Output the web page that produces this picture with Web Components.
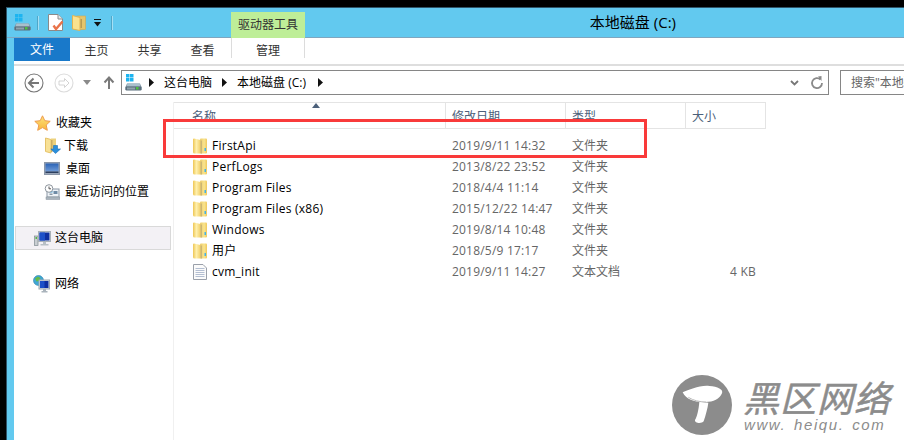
<!DOCTYPE html>
<html lang="zh"><head><meta charset="utf-8"><title>本地磁盘 (C:)</title>
<style>
html,body{margin:0;padding:0;background:#000;height:440px;width:904px;overflow:hidden}
body{font:12px/16px "Open Sans","Noto Sans CJK SC",sans-serif;color:#000;position:relative}
</style></head><body>
<x-window>
  <x-titlebar title-text="本地磁盘 (C:)" context="驱动器工具"></x-titlebar>
  <x-ribbon></x-ribbon>
  <x-addressbar></x-addressbar>
  <x-main>
    <x-nav slot="nav"></x-nav>
    <x-filelist slot="list">
      <x-row icon="folder" name="FirstApi" date="2019/9/11 14:32" type="文件夹"></x-row>
      <x-row icon="folder" name="PerfLogs" date="2013/8/22 23:52" type="文件夹"></x-row>
      <x-row icon="folder" name="Program Files" date="2018/4/4 11:14" type="文件夹"></x-row>
      <x-row icon="folder" name="Program Files (x86)" date="2015/12/22 14:47" type="文件夹"></x-row>
      <x-row icon="folder" name="Windows" date="2019/8/14 10:48" type="文件夹"></x-row>
      <x-row icon="folder" name="用户" date="2018/5/9 17:17" type="文件夹"></x-row>
      <x-row icon="doc" name="cvm_init" date="2019/9/11 14:27" type="文本文档" size="4 KB"></x-row>
    </x-filelist>
  </x-main>
</x-window>
<x-highlight></x-highlight>
<x-watermark></x-watermark>
<script>
const ICONS={
drive:`<svg width="17" height="17" viewBox="0 0 17 17"><g fill="#1db4f0"><rect x="1" y="0" width="3.5" height="3.5"/><rect x="5" y="0" width="3.5" height="3.5"/><rect x="1" y="4" width="3.5" height="3.5"/><rect x="5" y="4" width="3.5" height="3.5"/></g><path d="M2 9.500 15 9.500 16.500 13V16H.5V13Z" fill="#7d93a3"/><path d="M2.500 9.500H14.500L15.500 12.500H1.500Z" fill="#a9c0cc"/><rect x=".5" y="12.500" width="16" height="4" rx="1" fill="#5b6f7c"/><rect x="2" y="13.500" width="8" height="2" fill="#8fa3ad"/><rect x="11" y="13" width="2.500" height="2.500" fill="#4ec23f"/></svg>`,
qdoc:`<svg width="16" height="17" viewBox="0 0 16 17"><path d="M.5.500H10L14.500 5V16.500H.5Z" fill="#fff" stroke="#8a8a8a"/><path d="M10 .5V5H14.500" fill="#e6e6e6" stroke="#8a8a8a"/><path d="M5.500 11.500 8 15 14.500 7.500" fill="none" stroke="#e9734a" stroke-width="2.400"/></svg>`,
qfolder:`<svg width="14" height="16" viewBox="0 0 14 16"><rect x="5" y="1" width="8.500" height="13.500" fill="#e4c56b" stroke="#d2a94c" stroke-width=".6"/><path d="M.5.500 8 2.500V15.500L.5 14Z" fill="#fbe28e" stroke="#e2b552"/><rect x="8.500" y="4" width="1.500" height="9" fill="#b89b52"/></svg>`,
folder:`<svg width="14" height="16" viewBox="0 0 14 16"><defs><linearGradient id="fl" x1="0" x2="1" y1="0" y2="0"><stop offset="0" stop-color="#eec655"/><stop offset=".45" stop-color="#fff0ad"/><stop offset="1" stop-color="#f1cf69"/></linearGradient><linearGradient id="fr" x1="0" x2="1" y1="0" y2="0"><stop offset="0" stop-color="#eccb68"/><stop offset=".6" stop-color="#f9e48f"/><stop offset="1" stop-color="#efc85c"/></linearGradient></defs><rect x="7" y=".5" width="7" height="15" rx="1" fill="url(#fr)"/><path d="M0 1.500Q0 .5 1 .5L7.500 2V15.500H1.500Q0 15.500 0 14Z" fill="url(#fl)"/><rect x="7.500" y="2.500" width="1.500" height="13" fill="#cbb675"/><rect x="11.500" y="10" width="1.500" height="3" fill="#43b2e6"/></svg>`,
doc:`<svg width="14" height="16" viewBox="0 0 14 16"><path d="M.5.500H10L13.500 4V15.500H.5Z" fill="#fbfbfb" stroke="#9aa0aa"/><g stroke="#b4bfd2"><path d="M2.500 4.500H11.500M2.500 6.500H11.500M2.500 8.500H11.500M2.500 10.500H11.500M2.500 12.500H11.500"/></g></svg>`,
star:`<svg width="17" height="16" viewBox="0 0 17 16"><defs><linearGradient id="s" x1="0" y1="0" x2="0" y2="1"><stop offset="0" stop-color="#fbe37c"/><stop offset="1" stop-color="#f9b53a"/></linearGradient></defs><path d="M8.500 .8 10.800 5.700 16.200 6.300 12.200 10 13.300 15.300 8.500 12.600 3.700 15.300 4.800 10 .8 6.300 6.200 5.700Z" fill="url(#s)" stroke="#ee9b4d"/></svg>`,
download:`<svg width="16" height="17" viewBox="0 0 16 17"><path d="M.5 1 6 2.500V16L.5 14.500Z" fill="#f8e196" stroke="#e5c269"/><rect x="6" y="1.500" width="5" height="10" fill="#ecd17c"/><rect x="6" y="3" width="1.500" height="12" fill="#c9ad62"/><path d="M8.500 8.500H12.500V12H15.500L10.500 16.500 5.800 12H8.500Z" fill="#2a8fdb" stroke="#1a6fb7" stroke-width=".6"/></svg>`,
desktop:`<svg width="16" height="13" viewBox="0 0 16 13"><rect x=".5" y=".5" width="15" height="12" fill="#9aa6b8" stroke="#8a96a8"/><defs><linearGradient id="d" x1="0" y1="0" x2="0" y2="1"><stop offset="0" stop-color="#2b63b5"/><stop offset="1" stop-color="#6f9bd8"/></linearGradient></defs><rect x="1.500" y="1.500" width="13" height="8" fill="url(#d)"/><rect x="1.500" y="9.500" width="13" height="1.500" fill="#2d3f5f"/></svg>`,
recent:`<svg width="16" height="16" viewBox="0 0 16 16"><rect x="3" y="5" width="12" height="8" fill="#eef2f6" stroke="#8b98a5"/><rect x="5.500" y="7" width="3" height="1.500" fill="#4aa3d8"/><rect x="9.500" y="7" width="4" height="3" fill="#6e8ba5"/><rect x="5.500" y="9.500" width="3" height="1.500" fill="#8a9aa8"/><rect x="2" y="13" width="14" height="2.500" fill="#aab4bd" stroke="#87929c" stroke-width=".5"/><circle cx="5" cy="4.500" r="3.800" fill="#fff" stroke="#8d959d"/><path d="M5 2.500V4.800H7" fill="none" stroke="#555"/></svg>`,
pc:`<svg width="17" height="15" viewBox="0 0 17 15"><rect x=".5" y="5" width="3.500" height="9.500" fill="#c9ced2" stroke="#7f8a90" stroke-width=".7"/><rect x="1.500" y="6" width="1.500" height="2" fill="#54b948"/><rect x="4.500" y=".5" width="12" height="10" fill="#dfe4e8" stroke="#a9b1b8"/><rect x="5.500" y="1.500" width="10" height="8" fill="#0e2fa0"/><path d="M5.500 1.500H11V9.500H5.500Z" fill="#1c50c8"/><path d="M9 11H12V13H14.500V14.500H6.500V13H9Z" fill="#b7bfc5"/></svg>`,
net:`<svg width="17" height="18" viewBox="0 0 17 18"><circle cx="5.500" cy="5.500" r="5" fill="#3fa7d6" stroke="#2f80a8" stroke-width=".6"/><path d="M2 3.500 5 1.500 7.500 3 6 6 3.500 6.500Z" fill="#64bb47"/><path d="M6 7.500 9 7 8 10 6 10.500Z" fill="#64bb47"/><rect x="6" y="5" width="10.500" height="9" fill="#d5dde2" stroke="#9da8b0"/><rect x="7" y="6" width="8.500" height="7" fill="#0e2fa0"/><path d="M7 6H11.500V13H7Z" fill="#1c50c8"/><path d="M10 14H13V16H14.500V17.500H8.500V16H10Z" fill="#aab4bc"/></svg>`,
back:`<svg width="20" height="20" viewBox="0 0 20 20"><circle cx="10" cy="10" r="9" fill="#fff" stroke="#777" stroke-width="1.100"/><path d="M9.500 5.500 5 10 9.500 14.500M5 10H15" fill="none" stroke="#777" stroke-width="2"/></svg>`,
forward:`<svg width="20" height="20" viewBox="0 0 20 20"><circle cx="10" cy="10" r="9" fill="#fff" stroke="#dcdcdc" stroke-width="1.100"/><path d="M10.500 5.500 15 10 10.500 14.500V12H5V8H10.500Z" fill="#fff" stroke="#d4d4d4"/></svg>`,
up:`<svg width="12" height="14" viewBox="0 0 12 14"><path d="M6 13V2M1.500 6.500 6 1.500 10.500 6.500" fill="none" stroke="#7a7a7a" stroke-width="2"/></svg>`,
refresh:`<svg width="14" height="14" viewBox="0 0 14 14"><path d="M10.500 3.500A5 5 0 1 0 12 7" fill="none" stroke="#8a8a8a" stroke-width="1.800"/><path d="M8 .5 11.500 0 11.500 5Z" fill="#8a8a8a"/></svg>`,
chev:`<svg width="9" height="6" viewBox="0 0 9 6"><path d="M1 1 4.500 4.500 8 1" fill="none" stroke="#777" stroke-width="1.800"/></svg>`,
qdrop:`<svg width="7" height="8" viewBox="0 0 7 8"><rect y="0" width="7" height="1" fill="#111"/><path d="M0 3H7L3.500 7.500Z" fill="#111"/></svg>`,
navdrop:`<svg width="8" height="5" viewBox="0 0 8 5"><path d="M0 0H8L4 5Z" fill="#8a8a8a"/></svg>`,
crumb:`<svg width="5" height="9" viewBox="0 0 5 9"><path d="M0 0 5 4.500 0 9Z" fill="#111"/></svg>`,
sort:`<svg width="8" height="5" viewBox="0 0 8 5"><path d="M4 0 8 5H0Z" fill="#4c607a"/></svg>`
};
function def(name,css,html){
  customElements.define(name,class extends HTMLElement{
    connectedCallback(){
      if(this.shadowRoot)return;
      const r=this.attachShadow({mode:'open'});
      const a=k=>this.getAttribute(k)||'';
      r.innerHTML=`<style>${css}</style>`+(typeof html==='function'?html(a):html);
    }
  });
}
def('x-icon',':host{display:inline-flex;line-height:0;flex:none}',a=>ICONS[a('name')]||'');
def('x-window',
 `:host{display:block;box-sizing:border-box;margin:7px 0 0 6px;height:433px;border-top:1px solid #2f5468;border-left:1px solid #2f5468;background:#62c9ef;}`,
 `<slot></slot>`);
def('x-titlebar',
 `:host{display:flex;align-items:flex-end;height:30px;box-sizing:border-box;border-bottom:1px solid #7fa6bf}
  .qat{display:flex;align-items:center;height:29px;align-self:flex-start;padding-left:7px;width:224px;box-sizing:border-box}
  .sep{width:1px;height:14px;background:#a5dff4;border-left:1px solid #4fa6c7;box-sizing:content-box}
  .ctx{width:74px;height:26px;margin-bottom:-1px;background:#beee98;display:flex;align-items:center;justify-content:center;color:#333;}
  .ttl{width:371px;text-align:right;font-size:15px;line-height:28px;align-self:flex-start;white-space:nowrap}`,
 a=>`<div class="qat"><x-icon name="drive"></x-icon><span class="sep" style="margin:0 0 0 6px"></span><x-icon name="qdoc" style="margin-left:9px"></x-icon><x-icon name="qfolder" style="margin-left:8px"></x-icon><x-icon name="qdrop" style="margin-left:8px"></x-icon><span class="sep" style="margin-left:10px"></span></div><div class="ctx">${a('context')}</div><div class="ttl">${a('title-text')}</div>`);
def('x-ribbon',
 `:host{display:flex;height:26px;margin-left:7px;background:#fff;border-bottom:2px solid #dedede;color:#333}
  .tab{display:flex;align-items:center;justify-content:center;height:26px;width:53px}
  .file{width:56px;height:23px;background:#1979ca;color:#fff;}
  .mg{width:74px;margin-left:2px;background:linear-gradient(#dcdcdc,#dcdcdc) left top/1px 20px no-repeat,linear-gradient(#dcdcdc,#dcdcdc) right top/1px 20px no-repeat}`,
 `<div class="tab file">文件</div><div class="tab">主页</div><div class="tab">共享</div><div class="tab">查看</div><div class="mg tab">管理</div>`);
def('x-addressbar',
 `:host{display:flex;align-items:center;height:36px;margin-left:7px;background:#fff;padding-left:10px;box-sizing:border-box;padding-bottom:3px;overflow:hidden}
  .box{display:flex;align-items:center;height:25px;box-sizing:border-box;border:1px solid #868686;background:#fff;flex:none}
  .addr{width:708px;padding-left:3px}
  .search{width:80px;margin-left:11px;padding-left:10px;color:#666;overflow:hidden;white-space:nowrap}
  .g{flex:1}
  span{white-space:nowrap}`,
 `<x-icon name="back"></x-icon><x-icon name="forward" style="margin-left:10px"></x-icon><x-icon name="navdrop" style="margin-left:9px"></x-icon><x-icon name="up" style="margin-left:12px"></x-icon>
  <div class="box addr" style="margin-left:6px"><x-icon name="drive"></x-icon><x-icon name="crumb" style="margin-left:7px"></x-icon><span style="margin-left:10px">这台电脑</span><x-icon name="crumb" style="margin-left:10px"></x-icon><span style="margin-left:10px">本地磁盘 (C:)</span><x-icon name="crumb" style="margin-left:12px"></x-icon><div class="g"></div><x-icon name="chev"></x-icon><x-icon name="refresh" style="margin:0 4px 0 11px"></x-icon></div>
  <div class="box search">搜索"本地磁盘 (C:)"</div>`);
def('x-main',
 `:host{display:grid;grid-template-columns:159px 1fr;margin-left:7px;height:340px;background:#fff}`,
 `<slot name="nav"></slot><slot name="list"></slot>`);
def('x-nav',
 `:host{display:block;padding-top:9px;box-sizing:border-box}
  .r{display:flex;align-items:center;height:23px;white-space:nowrap}
  .sel{height:24px;margin:23px 2px 22px 1px;box-sizing:border-box;border:1px solid #d9d9d9;background:#f3f1f5}`,
 `<div class="r"><x-icon name="star" style="margin-left:20px"></x-icon><span style="margin-left:5px">收藏夹</span></div>
  <div class="r"><x-icon name="download" style="margin-left:31px"></x-icon><span style="margin-left:3px">下载</span></div>
  <div class="r"><x-icon name="desktop" style="margin-left:30px"></x-icon><span style="margin-left:6px">桌面</span></div>
  <div class="r"><x-icon name="recent" style="margin-left:30px"></x-icon><span style="margin-left:5px">最近访问的位置</span></div>
  <div class="r sel"><x-icon name="pc" style="margin-left:18px"></x-icon><span style="margin-left:4px">这台电脑</span></div>
  <div class="r"><x-icon name="net" style="margin-left:19px"></x-icon><span style="margin-left:5px">网络</span></div>`);
def('x-filelist',
 `:host{display:block;border-left:1px solid #f0f0f0;box-sizing:border-box;height:340px}
  .head{display:flex;height:27px;box-sizing:border-box;border-top:1px solid #e4e4e4;border-bottom:1px solid #e4e4e4;width:592px;color:#4c607a;position:relative}
  .c{box-sizing:border-box;padding:6px 0 0 6px;border-right:1px solid #e4e4e4}
  .n{width:272px;padding-left:18px}.d{width:120px}.t{width:120px}.s{width:80px}
  .arrow{position:absolute;left:138px;top:0;line-height:0}
  .rows{padding-top:6px}`,
 `<div class="head"><span class="arrow"><x-icon name="sort"></x-icon></span><div class="c n">名称</div><div class="c d">修改日期</div><div class="c t">类型</div><div class="c s">大小</div></div><div class="rows"><slot></slot></div>`);
def('x-row',
 `:host{display:flex;align-items:center;height:21px;white-space:nowrap}
  .i{width:38px;padding-left:19px;box-sizing:border-box;display:flex;flex:none}
  .n{width:240px;flex:none;letter-spacing:.25px}
  .d{width:120px;flex:none;color:#666;letter-spacing:.2px}
  .t{width:120px;flex:none;color:#666}
  .s{width:64px;flex:none;text-align:right;color:#666;letter-spacing:.2px}`,
 a=>`<div class="i"><x-icon name="${a('icon')}"></x-icon></div><div class="n">${a('name')}</div><div class="d">${a('date')}</div><div class="t">${a('type')}</div><div class="s">${a('size')}</div>`);
def('x-highlight',
 `:host{position:absolute;left:163px;top:119px;width:484px;height:39px;box-sizing:border-box;border:3px solid #f93a3a;pointer-events:none}`,'');
def('x-watermark',
 `:host{position:absolute;left:672px;top:375px;width:232px;height:65px;display:flex;color:#8c8c8c}
  svg{flex:none}
  .t{margin-left:11px;font-style:italic;white-space:nowrap}
  .a{font:italic 400 36px/34px "Noto Sans CJK SC",sans-serif;margin-top:4px;letter-spacing:1px;-webkit-text-stroke:.5px #8c8c8c}
  .b{font:italic 400 15px/14px "Liberation Sans",sans-serif;letter-spacing:1.600px;margin:5px 0 0 1px;word-spacing:2px}`,
 `<svg width="60" height="60" viewBox="83 105 180 180"><circle cx="173" cy="195" r="90" fill="#8c8c8c"/><path d="M165 185C163 210 158 230 152 240 150 250 172 252 178 244 184 225 190 205 192 188Z" fill="#fff"/><path d="M115 157C135 150 165 135 195 138 220 140 238 148 233 160 225 178 205 188 175 186 150 186 125 178 115 157Z" fill="#fff"/><path d="M132 172Q155 186 185 186" fill="none" stroke="#bbb" stroke-width="3"/></svg><div class="t"><div class="a">黑区网络</div><div class="b">www. heiqu. com</div></div>`);
</script>
</body></html>
